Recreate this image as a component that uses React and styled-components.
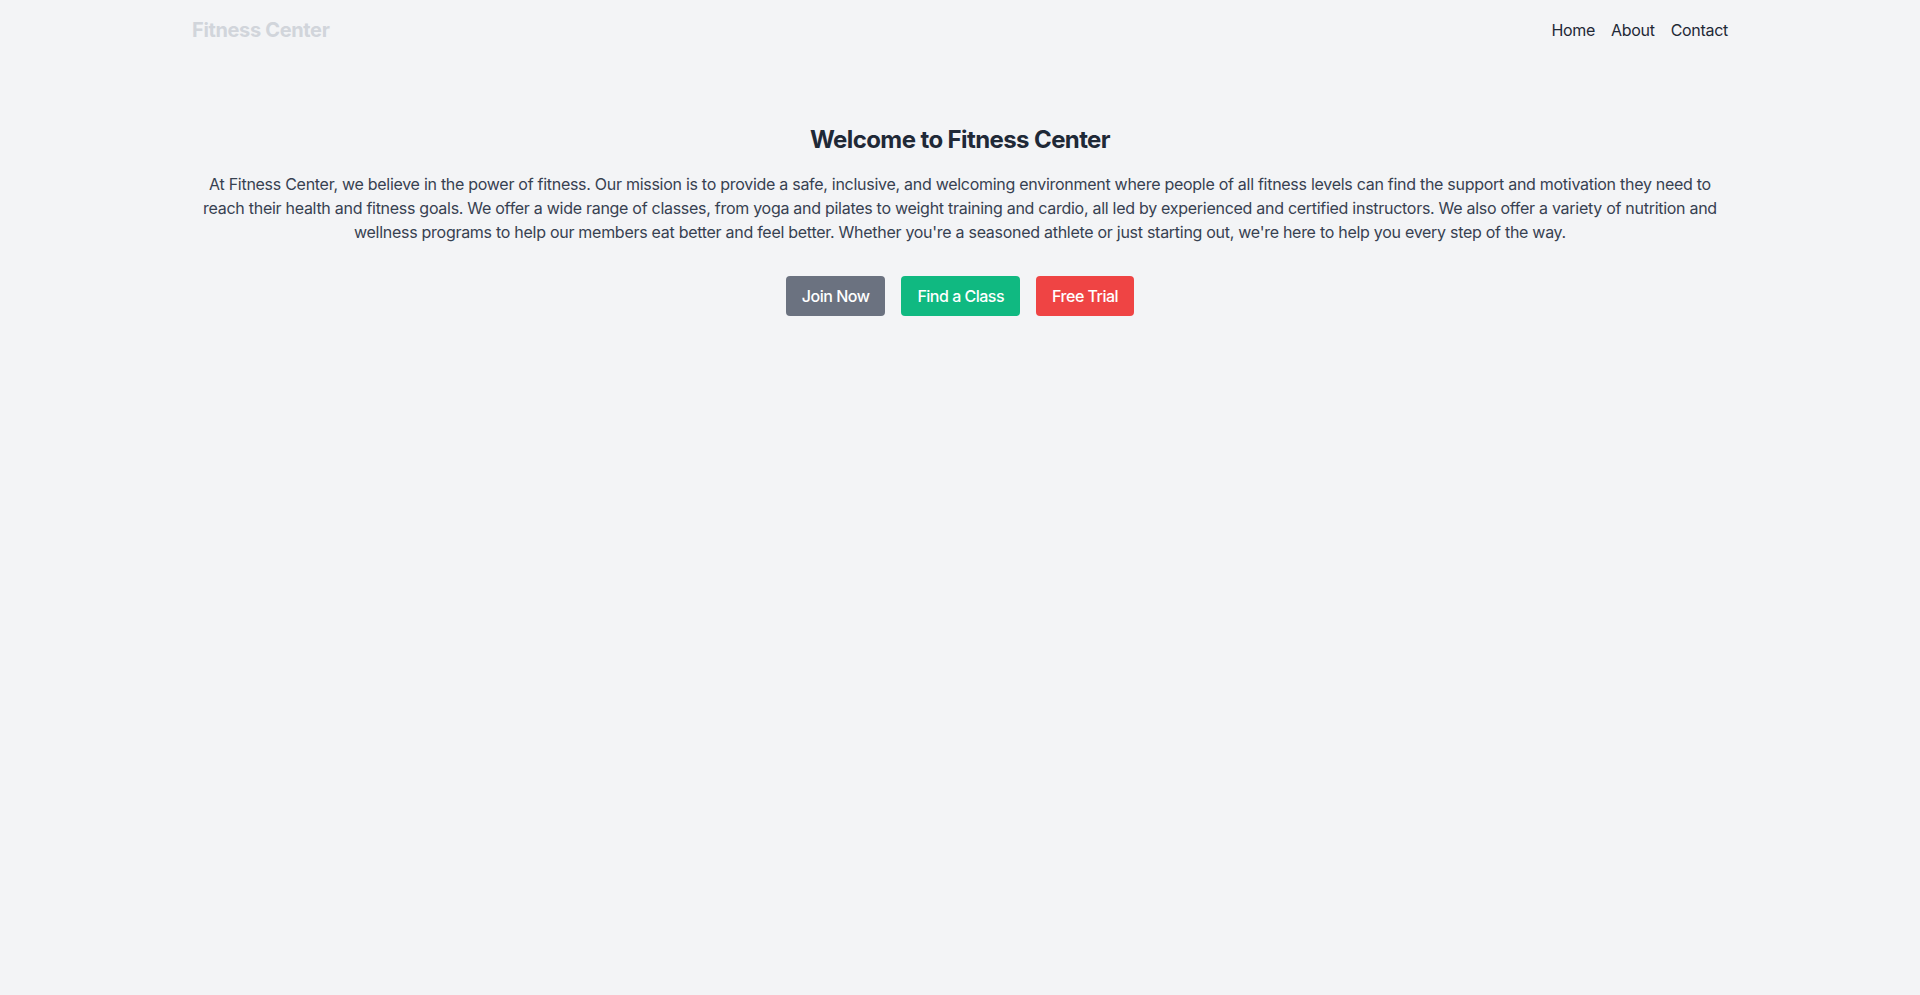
import React from "react";
import styled, { createGlobalStyle } from "styled-components";

const Global = createGlobalStyle`
  html, body { margin: 0; padding: 0; }
  body {
    background: #f3f4f6;
    font-family: Inter, "Noto Sans", Arial, sans-serif;
    color: #1f2937;
    min-height: 995px;
  }
  * { box-sizing: border-box; }
`;

const Container = styled.div`
  max-width: 1536px;
  margin: 0 auto;
`;

const Header = styled.header`
  display: flex;
  align-items: center;
  justify-content: space-between;
  padding: 16px 0;
`;

const Logo = styled.a`
  font-size: 20px;
  line-height: 28px;
  font-weight: 700;
  letter-spacing: -0.35px;
  color: #d1d5db;
  text-decoration: none;
`;

const Nav = styled.nav`
  display: flex;
  gap: 16px;
`;

const NavLink = styled.a`
  font-size: 16px;
  line-height: 24px;
  letter-spacing: -0.3px;
  color: #1f2937;
  text-decoration: none;
`;

const Main = styled.main`
  padding: 64px 0;
  text-align: center;
`;

const Title = styled.h1`
  margin: 0 0 16px;
  font-size: 24px;
  line-height: 32px;
  font-weight: 700;
  letter-spacing: -0.6px;
  color: #1f2937;
`;

const Text = styled.p`
  margin: 0;
  font-size: 16px;
  line-height: 24px;
  letter-spacing: -0.28px;
  color: #374151;
`;

const Actions = styled.div`
  display: flex;
  justify-content: center;
  gap: 16px;
  margin-top: 32px;
`;

const Button = styled.button`
  border: none;
  border-radius: 4px;
  padding: 8px 16px;
  font-family: inherit;
  font-size: 16px;
  line-height: 24px;
  font-weight: 500;
  letter-spacing: -0.5px;
  color: #ffffff;
  background: ${(p) => p.$bg};
  cursor: pointer;
`;

export default function App() {
  return (
    <>
      <Global />
      <Container>
        <Header>
          <Logo href="#">Fitness Center</Logo>
          <Nav>
            <NavLink href="#">Home</NavLink>
            <NavLink href="#">About</NavLink>
            <NavLink href="#">Contact</NavLink>
          </Nav>
        </Header>
        <Main>
          <Title>Welcome to Fitness Center</Title>
          <Text>
            At Fitness Center, we believe in the power of fitness. Our mission is to provide a safe, inclusive, and welcoming environment where people of all fitness levels can find the support and motivation they need to reach their health and fitness goals. We offer a wide range of classes, from yoga and pilates to weight training and cardio, all led by experienced and certified instructors. We also offer a variety of nutrition and wellness programs to help our members eat better and feel better. Whether you're a seasoned athlete or just starting out, we're here to help you every step of the way.
          </Text>
          <Actions>
            <Button $bg="#6b7280">Join Now</Button>
            <Button $bg="#10b981">Find a Class</Button>
            <Button $bg="#ef4444">Free Trial</Button>
          </Actions>
        </Main>
      </Container>
    </>
  );
}
